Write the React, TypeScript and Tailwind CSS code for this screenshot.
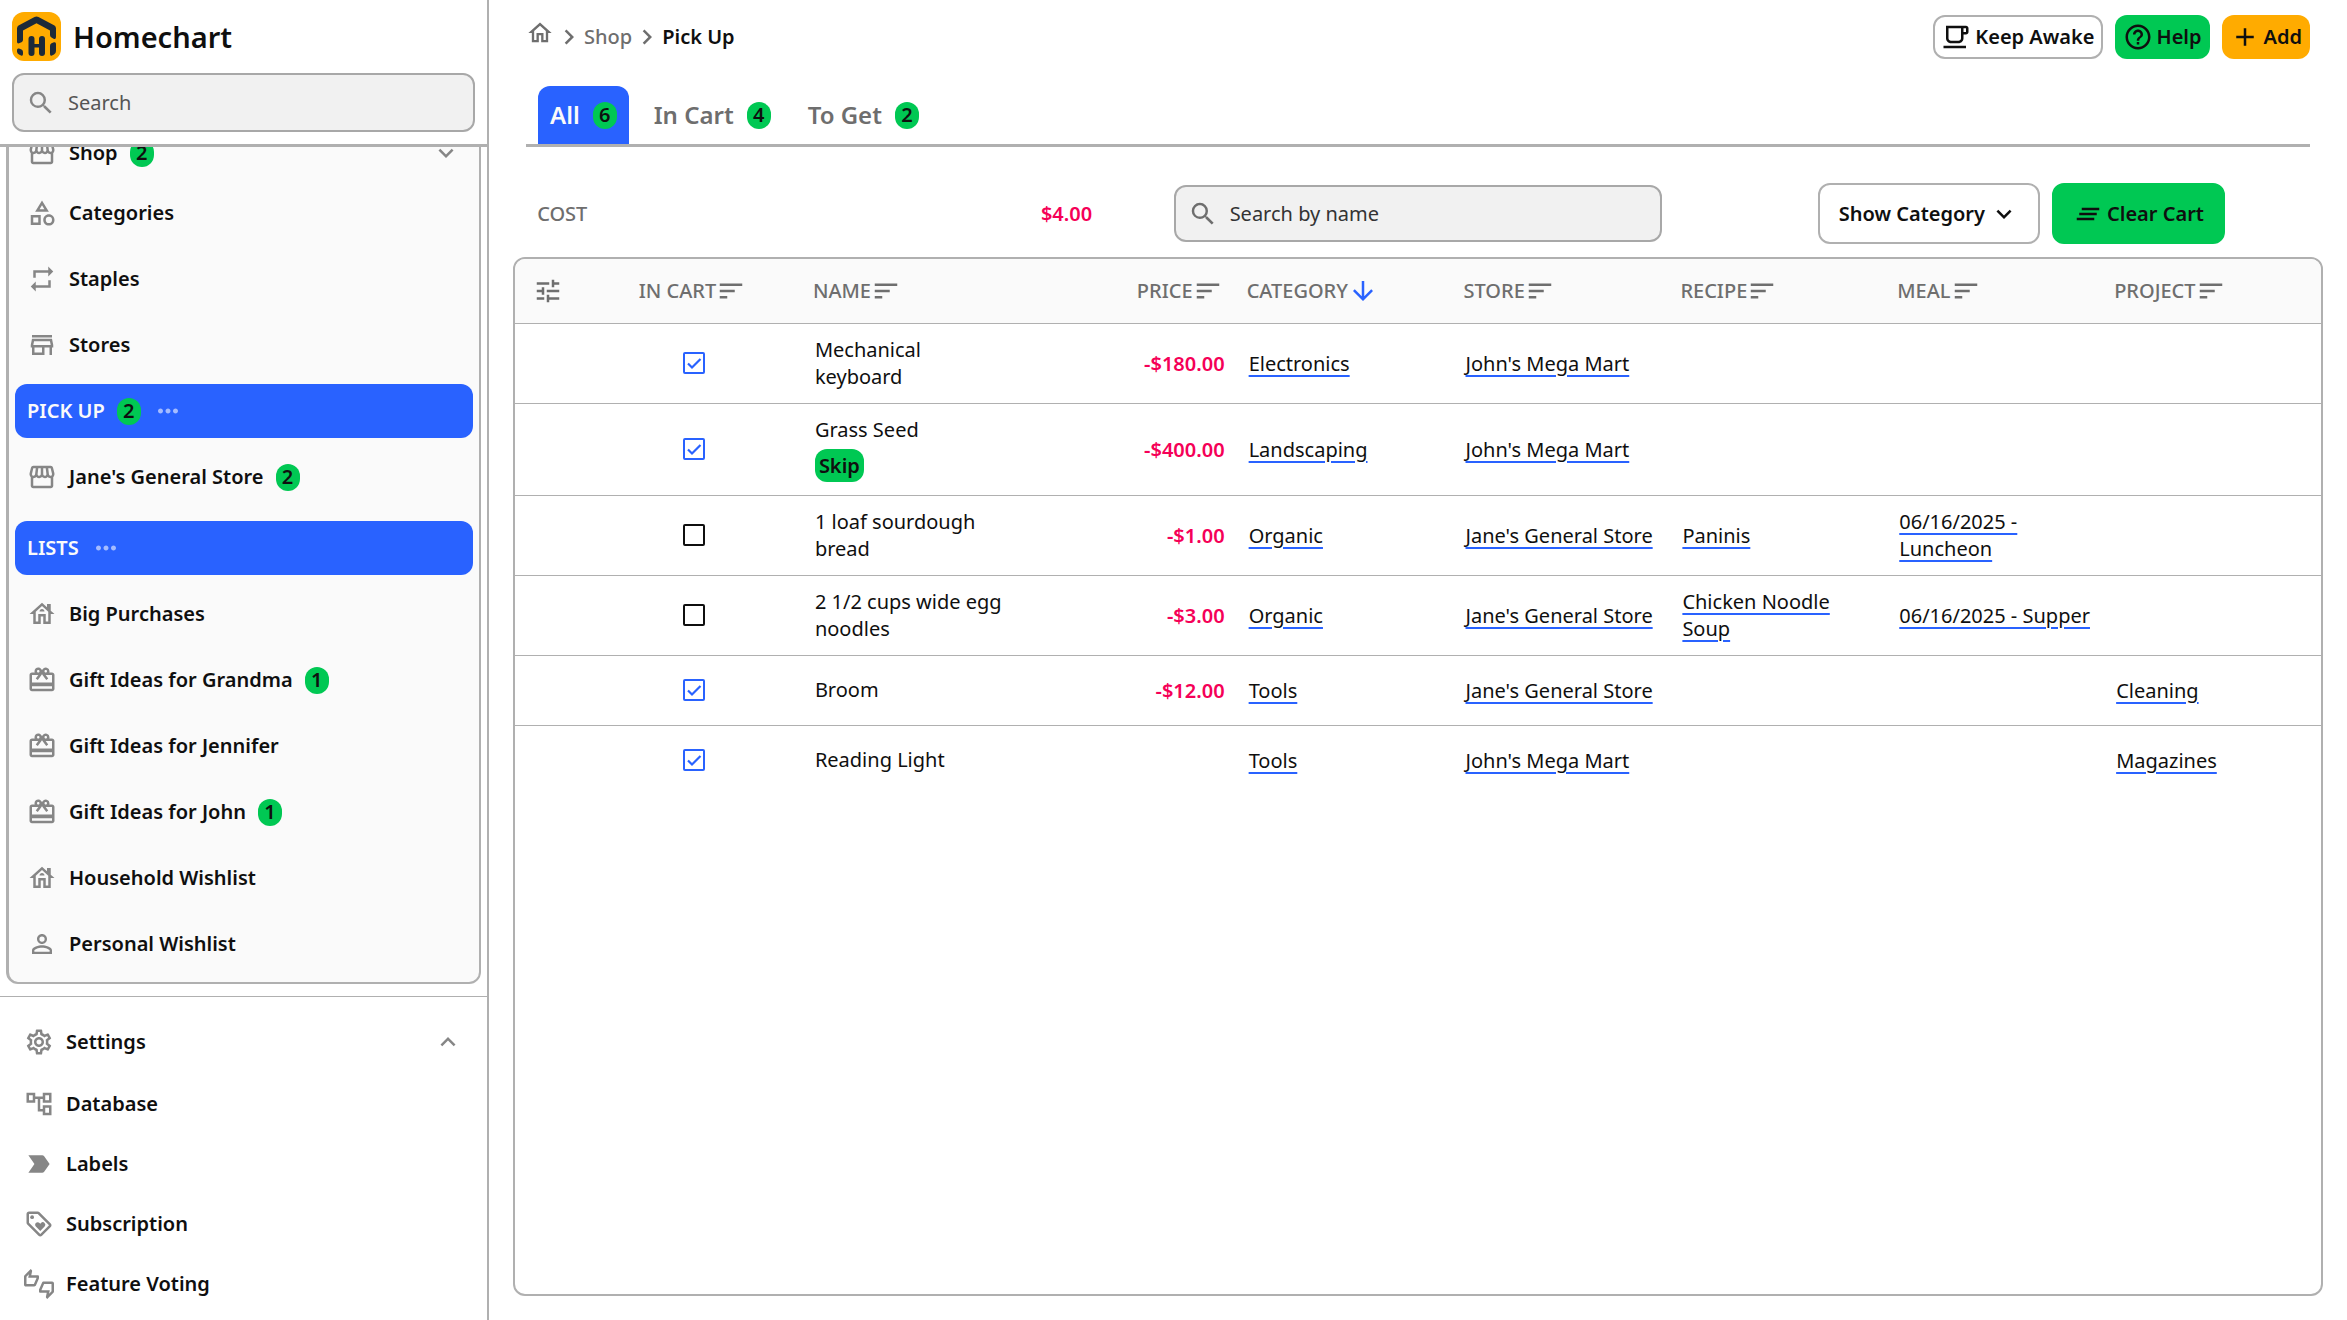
import React from "react";
import { IconType } from "react-icons";
import {
  MdAdd,
  MdArrowDownward,
  MdChevronRight,
  MdClearAll,
  MdExpandLess,
  MdExpandMore,
  MdHelpOutline,
  MdLabelImportant,
  MdMoreHoriz,
  MdOutlineAccountTree,
  MdOutlineCategory,
  MdOutlineHome,
  MdOutlineHouse,
  MdOutlineLocalCafe,
  MdOutlineLoyalty,
  MdOutlineRedeem,
  MdOutlineSettings,
  MdOutlineStore,
  MdOutlineStorefront,
  MdOutlineThumbsUpDown,
  MdPersonOutline,
  MdRepeat,
  MdSearch,
  MdSort,
  MdTune,
} from "react-icons/md";

interface NavItem {
  label: string;
  icon?: IconType;
  badge?: number;
}

interface Item {
  id: number;
  name: string;
  inCart: boolean;
  skip?: boolean;
  price?: string;
  category: string;
  store: string;
  recipe?: string;
  meal?: string;
  project?: string;
}

const shopItems: NavItem[] = [
  { label: "Categories", icon: MdOutlineCategory },
  { label: "Staples", icon: MdRepeat },
  { label: "Stores", icon: MdOutlineStore },
];

const listItems: NavItem[] = [
  { label: "Big Purchases", icon: MdOutlineHouse },
  { label: "Gift Ideas for Grandma", icon: MdOutlineRedeem, badge: 1 },
  { label: "Gift Ideas for Jennifer", icon: MdOutlineRedeem },
  { label: "Gift Ideas for John", icon: MdOutlineRedeem, badge: 1 },
  { label: "Household Wishlist", icon: MdOutlineHouse },
  { label: "Personal Wishlist", icon: MdPersonOutline },
];

const settingsItems: NavItem[] = [
  { label: "Database", icon: MdOutlineAccountTree },
  { label: "Labels", icon: MdLabelImportant },
  { label: "Subscription", icon: MdOutlineLoyalty },
  { label: "Feature Voting", icon: MdOutlineThumbsUpDown },
];

const columns = [
  { key: "inCart", label: "IN CART" },
  { key: "name", label: "NAME" },
  { key: "price", label: "PRICE" },
  { key: "category", label: "CATEGORY" },
  { key: "store", label: "STORE" },
  { key: "recipe", label: "RECIPE" },
  { key: "meal", label: "MEAL" },
  { key: "project", label: "PROJECT" },
];

const items: Item[] = [
  { id: 1, name: "Mechanical keyboard", inCart: true, price: "-$180.00", category: "Electronics", store: "John's Mega Mart" },
  { id: 2, name: "Grass Seed", inCart: true, skip: true, price: "-$400.00", category: "Landscaping", store: "John's Mega Mart" },
  { id: 3, name: "1 loaf sourdough bread", inCart: false, price: "-$1.00", category: "Organic", store: "Jane's General Store", recipe: "Paninis", meal: "06/16/2025 - Luncheon" },
  { id: 4, name: "2 1/2 cups wide egg noodles", inCart: false, price: "-$3.00", category: "Organic", store: "Jane's General Store", recipe: "Chicken Noodle Soup", meal: "06/16/2025 - Supper" },
  { id: 5, name: "Broom", inCart: true, price: "-$12.00", category: "Tools", store: "Jane's General Store", project: "Cleaning" },
  { id: 6, name: "Reading Light", inCart: true, category: "Tools", store: "John's Mega Mart", project: "Magazines" },
];

const Logo = () => (
  <svg viewBox="0 0 49 49" className="size-[49px]" aria-hidden="true">
    <rect width="49" height="49" rx="12" fill="#ffab00" />
    <g fill="#1c2a39">
      <path d="M5 16.500Q5 14.500 6.500 13.500L22.500 5Q24.500 4 26.500 5L42.500 13.500Q44 14.500 44 16.500V25Q44 27.500 42 27L39.500 25.500Q38 24.500 38 23V18.500L24.500 11.300L11 18.500V28Q11 29.500 9.500 30.300L7 31.300Q5 32 5 29.500Z" />
      <path d="M38 34Q38 32 39.500 31.300L42 30.300Q44 29.800 44 32V39Q44 41.500 42 42.500L40 43.500Q38 44.300 38 42Z" />
      <path d="M5 38Q5 36 7 36.500L9.500 37.500Q11 38.200 11 40V42Q11 44.300 9 43.500L7 42.500Q5 41.500 5 39.500Z" />
      <rect x="16.500" y="24" width="6" height="20" rx="3" />
      <rect x="27" y="24" width="6" height="20" rx="3" />
      <rect x="20" y="32" width="9" height="3.500" />
    </g>
  </svg>
);

const Badge = ({ count }: { count: number }) => (
  <span className="flex h-[27px] min-w-6 items-center justify-center rounded-xl bg-[#00c853] px-1.5 text-[20px] font-semibold text-[#0f0f0f]">
    {count}
  </span>
);

const NavLink = ({ item }: { item: NavItem }) => {
  const Icon = item.icon;
  return (
    <a href="#" className="flex h-[66px] items-center gap-3 pl-3">
      {Icon && <Icon className="size-[30px] text-[#868686]" />}
      <span>{item.label}</span>
      {item.badge && <Badge count={item.badge} />}
    </a>
  );
};

const NavHeading = ({ item }: { item: NavItem }) => (
  <div className="my-1.5 flex h-[54px] items-center gap-3 rounded-xl bg-[#2962ff] px-3 text-[#fafafa]">
    <span>{item.label}</span>
    {item.badge && <Badge count={item.badge} />}
    <button type="button" aria-label={`${item.label} options`}>
      <MdMoreHoriz className="size-[30px] text-[#a5bcff]" />
    </button>
  </div>
);

const Sidebar = () => (
  <aside className="flex w-[489px] shrink-0 flex-col border-r-2 border-[#b0b0b0]">
    <div className="flex flex-col gap-3 border-b-3 border-[#b0b0b0] p-3">
      <div className="flex items-center gap-3">
        <Logo />
        <span className="text-[29px] leading-[49px] font-semibold">Homechart</span>
      </div>
      <label className="flex h-[59px] items-center gap-3 rounded-xl border-2 border-[#a8a8a8] bg-[#f1f1f1] px-3">
        <MdSearch className="size-[30px] shrink-0 text-[#868686]" />
        <input
          type="text"
          placeholder="Search"
          aria-label="Search"
          className="w-full bg-transparent outline-none placeholder:text-[#555555]"
        />
      </label>
    </div>

    <div className="flex min-h-0 flex-1 flex-col justify-end overflow-hidden px-1.5 pb-3 text-[20px] font-semibold">
      <nav className="rounded-xl border-2 border-l-3 border-[#b0b0b0] bg-[#fafafa] px-1.5 pb-[5px]">
        <a href="#" className="flex h-[54px] items-center gap-3 px-3">
          <MdOutlineStorefront className="size-[30px] text-[#868686]" />
          <span>Shop</span>
          <Badge count={2} />
          <MdExpandMore className="ml-auto size-[30px] text-[#868686]" />
        </a>
        {shopItems.map((item) => (
          <NavLink key={item.label} item={item} />
        ))}
        <NavHeading item={{ label: "PICK UP", badge: 2 }} />
        <NavLink item={{ label: "Jane's General Store", icon: MdOutlineStorefront, badge: 2 }} />
        <div className="pt-[5px]">
          <NavHeading item={{ label: "LISTS" }} />
        </div>
        {listItems.map((item) => (
          <NavLink key={item.label} item={item} />
        ))}
      </nav>
    </div>

    <nav className="border-t border-[#b0b0b0] px-6 pt-[13px] pb-1.5 text-[20px] font-semibold">
      <a href="#" className="flex h-16 items-center gap-3">
        <MdOutlineSettings className="size-[30px] text-[#868686]" />
        <span>Settings</span>
        <MdExpandLess className="ml-auto size-[30px] text-[#868686]" />
      </a>
      {settingsItems.map((item) => {
        const Icon = item.icon!;
        return (
          <a key={item.label} href="#" className="flex h-[60px] items-center gap-3">
            <Icon className="size-[30px] text-[#868686]" />
            <span>{item.label}</span>
          </a>
        );
      })}
    </nav>
  </aside>
);

const Header = () => (
  <header className="flex items-center justify-between px-[37px] pt-[15px]">
    <nav className="flex items-center text-[20px] font-medium text-[#6e6e6e]" aria-label="Breadcrumb">
      <a href="#" aria-label="Home" className="pb-2">
        <MdOutlineHome className="size-7" />
      </a>
      <MdChevronRight className="size-[30px]" />
      <a href="#">Shop</a>
      <MdChevronRight className="size-[30px]" />
      <span className="font-semibold text-[#0f0f0f]">Pick Up</span>
    </nav>
    <div className="flex gap-3 text-[20px] font-semibold">
      <button type="button" className="flex h-11 items-center gap-1 rounded-xl border-2 border-[#b0b0b0] px-1.5">
        <MdOutlineLocalCafe className="size-[30px]" />
        Keep Awake
      </button>
      <button type="button" className="flex h-11 items-center gap-1 rounded-xl bg-[#00c853] px-2">
        <MdHelpOutline className="size-[30px]" />
        Help
      </button>
      <button type="button" className="flex h-11 items-center gap-1 rounded-xl bg-[#ffab00] px-2">
        <MdAdd className="size-[30px]" />
        Add
      </button>
    </div>
  </header>
);

const Tabs = () => {
  const tabs = [
    { label: "All", count: 6 },
    { label: "In Cart", count: 4 },
    { label: "To Get", count: 2 },
  ];

  return (
    <div className="mx-[37px] mt-[27px] flex gap-[13px] border-b-3 border-[#b0b0b0] px-3" role="tablist">
      {tabs.map((tab, i) => (
        <button
          key={tab.label}
          type="button"
          role="tab"
          aria-selected={i === 0}
          className={`flex h-[58px] items-center gap-[13px] rounded-t-xl px-3 text-[24px] font-semibold ${
            i === 0 ? "bg-[#2962ff] text-[#fafafa]" : "text-[#6e6e6e]"
          }`}
        >
          {tab.label}
          <Badge count={tab.count} />
        </button>
      ))}
    </div>
  );
};

const Toolbar = () => (
  <div className="mt-9 grid h-[61px] grid-cols-3 items-center justify-items-center text-[20px]">
    <div className="flex w-[92%] justify-between font-medium">
      <span className="text-[#6e6e6e]">COST</span>
      <span className="font-semibold text-[#f50057]">$4.00</span>
    </div>
    <label className="flex h-[57px] w-[81%] items-center gap-3 rounded-xl border-2 border-[#a8a8a8] bg-[#f1f1f1] px-3">
      <MdSearch className="size-[30px] shrink-0 text-[#6e6e6e]" />
      <input
        type="text"
        placeholder="Search by name"
        aria-label="Search by name"
        className="w-full bg-transparent outline-none placeholder:text-[#333333]"
      />
    </label>
    <div className="flex gap-3 font-semibold">
      <button type="button" className="flex h-[61px] items-center gap-1 rounded-xl border-2 border-[#b0b0b0] px-[19px]">
        Show Category
        <MdExpandMore className="size-[30px]" />
      </button>
      <button type="button" className="flex h-[61px] items-center gap-1 rounded-xl border-2 border-[#00c853] bg-[#00c853] px-[19px]">
        <MdClearAll className="size-[30px]" />
        Clear Cart
      </button>
    </div>
  </div>
);

const CellLink = ({ text }: { text?: string }) =>
  text ? (
    <a href="#" className="underline decoration-[#2962ff] decoration-2 underline-offset-4">
      {text}
    </a>
  ) : null;

const ItemsTable = () => (
  <div className="mt-[13px] min-h-0 flex-1 overflow-hidden rounded-xl border-2 border-[#b0b0b0]">
    <table className="w-full table-fixed border-collapse text-[20px] leading-[27px]">
      <thead>
        <tr className="h-16 border-b border-[#b0b0b0] bg-[#fafafa] text-[#6e6e6e]">
          <th className="w-[71px] pl-[18px] text-left">
            <button type="button" aria-label="Columns" className="block">
              <MdTune className="size-[30px]" />
            </button>
          </th>
          {columns.map((column) => (
            <th key={column.key} className="pr-3.5 pl-2.5 font-medium">
              <button
                type="button"
                className={`flex w-full items-center ${
                  column.key === "inCart" ? "justify-center" : column.key === "price" ? "justify-end" : ""
                }`}
              >
                {column.label}
                {column.key === "category" ? (
                  <MdArrowDownward className="size-[30px] text-[#2962ff]" />
                ) : (
                  <MdSort className="size-[30px]" />
                )}
              </button>
            </th>
          ))}
        </tr>
      </thead>
      <tbody className="text-[#0f0f0f]">
        {items.map((item) => (
          <tr key={item.id} className="h-[70px] border-b border-[#b0b0b0] last:border-b-0">
            <td />
            <td>
              <label className="relative mx-auto flex size-[22px] items-center justify-center">
                <input
                  type="checkbox"
                  defaultChecked={item.inCart}
                  aria-label={item.name}
                  className="peer size-[22px] appearance-none rounded-[2px] border-2 border-[#0f0f0f] checked:border-[#2962ff]"
                />
                <svg
                  viewBox="0 0 22 22"
                  className="pointer-events-none absolute inset-0 hidden size-[22px] peer-checked:block"
                >
                  <path d="M5 11.500L9 15.500L17.500 7" fill="none" stroke="#2962ff" strokeWidth="2.2" />
                </svg>
              </label>
            </td>
            <td className="px-3 pt-3 pb-[13px]">
              {item.name}
              {item.skip && (
                <div>
                  <span className="mt-1.5 inline-block rounded-xl bg-[#00c853] px-1 py-[3px] font-semibold">Skip</span>
                </div>
              )}
            </td>
            <td className="px-3 text-right font-semibold text-[#f50057]">{item.price}</td>
            <td className="px-3"><CellLink text={item.category} /></td>
            <td className="px-3"><CellLink text={item.store} /></td>
            <td className="px-3"><CellLink text={item.recipe} /></td>
            <td className="px-3"><CellLink text={item.meal} /></td>
            <td className="px-3"><CellLink text={item.project} /></td>
          </tr>
        ))}
      </tbody>
    </table>
  </div>
);

export default function App() {
  return (
    <div className="flex h-screen bg-white font-['Noto_Sans',sans-serif] text-[20px] text-[#0f0f0f]">
      <Sidebar />
      <main className="flex min-w-0 flex-1 flex-col">
        <Header />
        <Tabs />
        <div className="flex min-h-0 flex-1 flex-col px-6 pb-6">
          <Toolbar />
          <ItemsTable />
        </div>
      </main>
    </div>
  );
}
